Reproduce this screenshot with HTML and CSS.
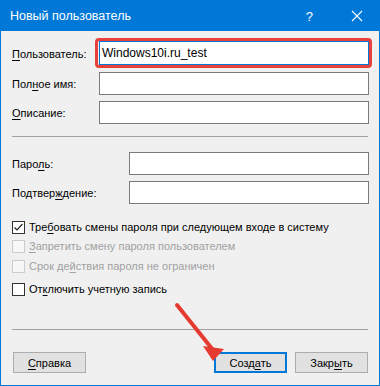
FILE: index.html
```html
<!DOCTYPE html>
<html>
<head>
<title>Новый пользователь</title>
<link rel="stylesheet" href="styles.css">
</head>
<body>
<div class="window">
  <div class="titlebar">
    <span class="title">Новый пользователь</span>
    <span class="help">?</span>
    <svg class="close" width="12" height="12" viewBox="0 0 12 12">
      <path d="M1 1 L11 11 M11 1 L1 11" stroke="#fff" stroke-width="1.1" fill="none"/>
    </svg>
  </div>

  <div class="content">
    <div class="row row-user">
      <span class="label"><u>П</u>ользователь:</span>
      <span class="mark"><span class="field focus">Windows10i.ru_test</span></span>
    </div>
    <div class="row row-gap4">
      <span class="label">Пол<u>н</u>ое имя:</span>
      <span class="field"></span>
    </div>
    <div class="row row-gap6">
      <span class="label"><u>О</u>писание:</span>
      <span class="field"></span>
    </div>

    <div class="sep sep-top"></div>

    <div class="row row-gap15">
      <span class="label">Паро<u>л</u>ь:</span>
      <span class="field short"></span>
    </div>
    <div class="row row-gap6">
      <span class="label">Подтвер<u>ж</u>дение:</span>
      <span class="field short"></span>
    </div>

    <div class="check check-1">
      <span class="box">
        <svg width="11" height="11" viewBox="0 0 11 11"><path d="M1.5 5.5 L4 8 L9.5 2" stroke="#222" stroke-width="1.2" fill="none"/></svg>
      </span>
      <span>Тре<u>б</u>овать смены пароля при следующем входе в систему</span>
    </div>
    <div class="check check-2 disabled">
      <span class="box"></span>
      <span><u>З</u>апретить смену пароля пользователем</span>
    </div>
    <div class="check check-3 disabled">
      <span class="box"></span>
      <span>Срок де<u>й</u>ствия пароля не ограничен</span>
    </div>
    <div class="check check-4">
      <span class="box"></span>
      <span>От<u>к</u>лючить учетную запись</span>
    </div>

    <div class="sep sep-bottom"></div>

    <div class="buttons">
      <span class="btn"><u>С</u>правка</span>
      <span class="spacer"></span>
      <span class="btn default">Созд<u>а</u>ть</span>
      <span class="btn">Закр<u>ы</u>ть</span>
    </div>
  </div>

  <svg class="arrow" width="70" height="70" viewBox="170 300 70 70">
    <path d="M177 305 L213 350" stroke="#e53a2f" stroke-width="4" stroke-linecap="round" fill="none"/>
    <polygon points="213,361 203,346 224,349" fill="#e53a2f"/>
  </svg>
</div>
</body>
</html>
```

FILE: styles.css
```css
*{
  box-sizing: border-box;
}
body{
  margin: 0;
  font-family: "Liberation Sans", Arial, sans-serif;
  font-size: 11px;
  color: #000;
}
u{
  text-decoration: underline;
  text-underline-offset: 2px;
}

.window{
  position: relative;
  width: 380px;
  height: 386px;
  border: 1px solid #0078d7;
  border-top: none;
  background-color: #f0f0f0;
}

.titlebar{
  display: flex;
  align-items: center;
  height: 31px;
  margin: 0 -1px;
  padding: 0 0 0 10px;
  background-color: #0078d7;
  color: #fff;
}
.title{
  flex: 1;
  font-size: 12.5px;
  padding-top: 1px;
}
.help{
  font-size: 13px;
  margin-right: 38px;
  padding-top: 1px;
}
.close{
  margin-right: 17px;
}

.content{
  padding: 7px 10px 0 11px;
}

.row{
  display: flex;
  align-items: center;
}
.label{
  flex: 1;
  padding-top: 1px;
}
.row-user{
  height: 30px;
}
.row-gap4{ margin-top: 4px; }
.row-gap6{ margin-top: 6px; }
.row-gap15{ margin-top: 15px; }

.mark{
  display: block;
  margin: 0 -3px 0 -4px;
  padding: 0 0 0 1px;
  border: 3px solid #e8403a;
  border-radius: 4px;
}
.field{
  display: block;
  width: 270px;
  height: 23px;
  border: 1px solid #7a7a7a;
  background-color: #fff;
  padding: 4px 0 0 2px;
  font-size: 12px;
}
.field.short{
  width: 240px;
}
.field.focus{
  height: 24px;
  border-color: #0078d7;
}

.sep{
  height: 1px;
  background-color: #a0a0a0;
  margin-right: 1px;
}
.sep-top{ margin-top: 12px; }
.sep-bottom{ margin-top: 32px; }

.check{
  display: flex;
  align-items: center;
  height: 16px;
}
.check-1{ margin-top: 15px; }
.check-2{ margin-top: 3px; }
.check-3{ margin-top: 4px; }
.check-4{ margin-top: 7px; }
.box{
  display: flex;
  align-items: center;
  justify-content: center;
  width: 13px;
  height: 13px;
  margin-right: 4px;
  border: 1px solid #333;
  background-color: #fff;
}
.disabled{
  color: #a0a0a0;
}
.disabled .box{
  border-color: #cccccc;
  background-color: #f7f7f7;
}

.buttons{
  display: flex;
  gap: 8px;
  margin: 22px 1px 0 1px;
}
.spacer{
  flex: 1;
}
.btn{
  display: flex;
  align-items: center;
  justify-content: center;
  width: 73px;
  height: 21px;
  border: 1px solid #adadad;
  background-color: #e1e1e1;
}
.btn.default{
  border: 2px solid #0078d7;
}

.arrow{
  position: absolute;
  left: 169px;
  top: 300px;
}
```
